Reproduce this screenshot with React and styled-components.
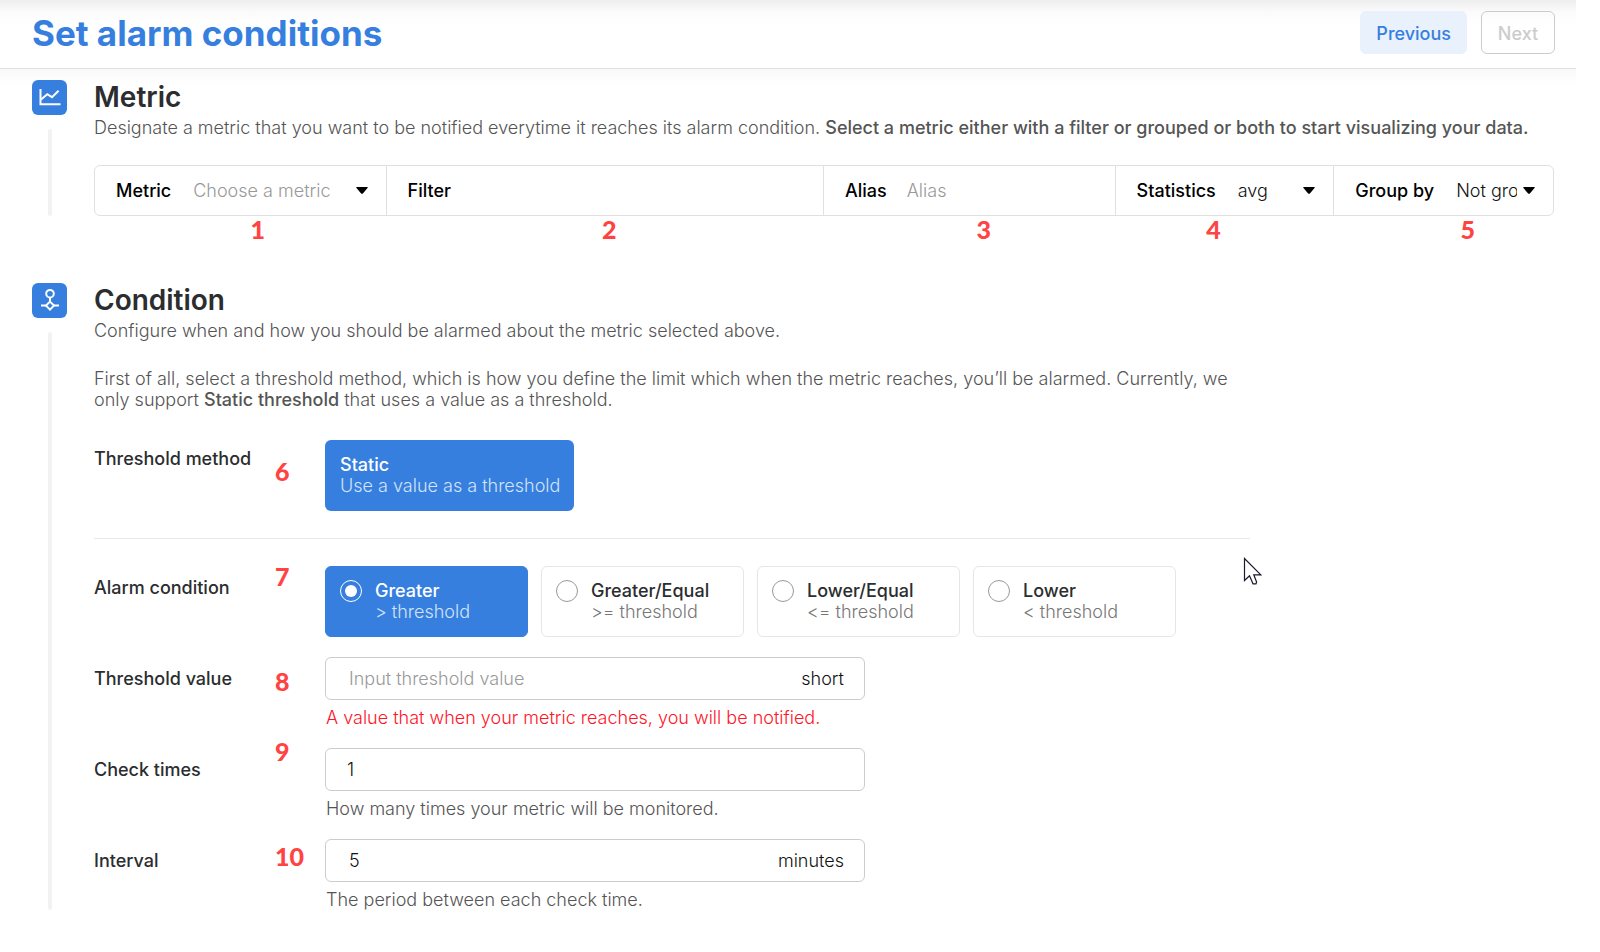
import React, { useState } from "react";
import styled, { createGlobalStyle, css } from "styled-components";

const blue = "#367fdf";

const GlobalStyle = createGlobalStyle`
  *, *::before, *::after { box-sizing: border-box; }
  body {
    margin: 0;
    background: #fff;
    color: #2b2d2f;
    font-family: Inter, "Liberation Sans", sans-serif;
    font-size: 18px;
    font-weight: 300;
    line-height: 21px;
  }
  button, input, select { font: inherit; color: inherit; }
  h1, h2, p, fieldset { margin: 0; padding: 0; border: 0; }
`;

const Page = styled.div`
  position: relative;
  margin-right: 24px;
`;

const Header = styled.header`
  display: flex;
  align-items: center;
  justify-content: space-between;
  height: 69px;
  padding: 0 21px 4px 32px;
  border-bottom: 1px solid #e0e0e0;
  background: linear-gradient(#eeeeee, #fbfbfb 12px, #ffffff 24px);
`;

const Title = styled.h1`
  padding-top: 2px;
  color: ${blue};
  font-size: 35px;
  line-height: 44px;
  font-weight: 700;
`;

const Actions = styled.div`
  display: flex;
  gap: 14px;
`;

const Button = styled.button`
  min-width: 74px;
  height: 43px;
  padding: 2px 15px 0;
  border: 1px solid ${(p) => (p.$primary ? "#e9f1fc" : "#cccccc")};
  border-radius: 6px;
  background: ${(p) => (p.$primary ? "#e9f1fc" : "transparent")};
  color: ${(p) => (p.$primary ? blue : "#cccccc")};
  font-weight: 500;
`;

const Main = styled.main`
  display: flex;
  flex-direction: column;
  gap: 67px;
  padding: 11px 22px 41px 32px;
  background: linear-gradient(#f9f9f9, #ffffff 16px);
`;

const Section = styled.section`
  display: flex;
  gap: 27px;
`;

const Side = styled.div`
  display: flex;
  flex: none;
  flex-direction: column;
  align-items: center;
  gap: 14px;
  width: 35px;
`;

const IconTile = styled.div`
  display: grid;
  place-items: center;
  width: 35px;
  height: 35px;
  border-radius: 6px;
  background: ${blue};
`;

const Rail = styled.div`
  flex: 1;
  width: 4px;
  border-radius: 2px;
  background: #f2f2f2;
`;

const Body = styled.div`
  flex: 1;
  min-width: 0;
`;

const Heading = styled.h2`
  margin-bottom: 3px;
  font-size: 28px;
  line-height: 34px;
  font-weight: 600;
`;

const Text = styled.p`
  max-width: ${(p) => (p.$narrow ? "1145px" : "none")};
  margin-bottom: 27px;
  color: #555555;

  strong { font-weight: 500; }
`;

const QueryBar = styled.div`
  display: grid;
  grid-template-columns: 20fr 30fr 20fr 15fr 15fr;
  border: 1px solid #e0e0e0;
  border-radius: 6px;
  background: #fff;
  color: #000;
`;

const Cell = styled.div`
  position: relative;
  display: flex;
  align-items: center;
  min-width: 0;
  height: 49px;
  padding: 0 18px 0 21px;

  &:not(:last-child) { border-right: 1px solid #e0e0e0; }
`;

const CellLabel = styled.label`
  flex: none;
  margin-right: 20px;
  font-weight: 500;
`;

const CellSelect = styled.select`
  flex: 1;
  min-width: 0;
  height: 40px;
  padding: 0 6px 0 2px;
  border: 0;
  outline: 0;
  appearance: none;
  background: transparent;
  color: ${(p) => (p.$empty ? "#999999" : "#111111")};
`;

const CellInput = styled.input`
  flex: 1;
  min-width: 0;
  height: 40px;
  padding: 0;
  border: 0;
  outline: 0;
  background: transparent;

  &::placeholder { color: #999999; }
`;

const markerText = css`
  position: absolute;
  color: #ff4343;
  font-family: Lato, "Liberation Sans", sans-serif;
  font-size: 25px;
  line-height: 28px;
  font-weight: 900;
`;

const CellMarker = styled.span`
  ${markerText}
  top: 100%;
  left: ${(p) => p.$at};
  transform: translateX(-50%);
`;

const RowMarker = styled.span`
  ${markerText}
  top: ${(p) => p.$top}px;
  left: 181px;
`;

const Form = styled.form`
  display: flex;
  flex-direction: column;
  gap: 20px;
  padding-top: 3px;
`;

const FormRow = styled.div`
  position: relative;
  display: flex;
`;

const RowLabel = styled.label`
  flex: none;
  width: 231px;
  padding-top: ${(p) => (p.$raised ? "8px" : "11px")};
  font-weight: 500;
`;

const Divider = styled.hr`
  width: 1156px;
  max-width: 100%;
  height: 1px;
  margin: 7px 0;
  border: 0;
  background: #e8e8e8;
`;

const MethodButton = styled.button`
  display: flex;
  flex-direction: column;
  justify-content: center;
  height: 71px;
  padding: 0 14px 2px 15px;
  border: 0;
  border-radius: 6px;
  background: ${blue};
  color: #fff;
  text-align: left;
`;

const OptionName = styled.span`
  font-weight: 500;
`;

const OptionHint = styled.span`
  color: ${(p) => (p.$active ? "#d3e3f8" : "#777777")};
`;

const Options = styled.div`
  display: flex;
  flex-wrap: wrap;
  gap: 13px;
`;

const Option = styled.label`
  display: flex;
  gap: 13px;
  width: 203px;
  height: 71px;
  padding: 13px 14px;
  border: 1px solid ${(p) => (p.$active ? blue : "#e6e6e6")};
  border-radius: 6px;
  background: ${(p) => (p.$active ? blue : "#fff")};
  color: ${(p) => (p.$active ? "#fff" : "#2b2d2f")};
`;

const OptionText = styled.span`
  display: flex;
  flex-direction: column;
`;

const Radio = styled.input`
  flex: none;
  display: grid;
  place-items: center;
  width: 22px;
  height: 22px;
  margin: 0;
  border: 1px solid #999999;
  border-radius: 50%;
  appearance: none;
  background: transparent;

  &:checked { border-color: #fff; }
  &:checked::before {
    content: "";
    width: 12px;
    height: 12px;
    border-radius: 50%;
    background: #fff;
  }
`;

const Field = styled.div`
  flex: 0 1 540px;
  min-width: 0;
`;

const InputBox = styled.div`
  display: flex;
  align-items: center;
  height: 43px;
  padding: 0 20px 0 ${(p) => (p.$unit ? "23px" : "21px")};
  border: 1px solid #cccccc;
  border-radius: 6px;
  color: #111111;
`;

const Input = styled.input`
  flex: 1;
  min-width: 0;
  height: 40px;
  padding: 0;
  border: 0;
  outline: 0;
  background: transparent;

  &::placeholder { color: #999999; }
`;

const Help = styled.p`
  padding: 7px 0 0 1px;
  color: ${(p) => (p.$error ? "#ff1428" : "#555555")};
`;

const Cursor = styled.svg`
  position: absolute;
  top: 557px;
  left: 1243px;
  pointer-events: none;
`;

const ChartIcon = () => (
  <svg width="35" height="35" viewBox="0 0 35 35" fill="none" stroke="#fff" strokeWidth="2" aria-hidden="true">
    <path d="M8.5 9V24.3H28.5" />
    <path d="M9 19.6L15.3 14.2L20 17.2L26.6 10.8" />
  </svg>
);

const NodeIcon = () => (
  <svg width="35" height="35" viewBox="0 0 35 35" fill="none" stroke="#fff" strokeWidth="2" aria-hidden="true">
    <circle cx="18" cy="10.7" r="3.8" />
    <path d="M18 14.5V19" />
    <path d="M18 18.6L22 22.6L18 26.6L14 22.6Z" />
    <path d="M9 22.6H14M22 22.6H27" />
  </svg>
);

const Arrow = () => (
  <svg width="12" height="7" viewBox="0 0 12 7" aria-hidden="true">
    <path d="M0.8 0H11.2Q12.3 0.3 11.5 1.1L6.9 6.4Q6 7.3 5.1 6.4L0.5 1.1Q-0.3 0.3 0.8 0Z" fill="#000" />
  </svg>
);

const conditions = [
  ["Greater", "> threshold"],
  ["Greater/Equal", ">= threshold"],
  ["Lower/Equal", "<= threshold"],
  ["Lower", "< threshold"],
];

function SelectCell({ id, label, value, empty, marker, at }) {
  return (
    <Cell>
      <CellLabel htmlFor={id}>{label}</CellLabel>
      <CellSelect id={id} $empty={empty}>
        <option>{value}</option>
      </CellSelect>
      <Arrow />
      <CellMarker $at={at}>{marker}</CellMarker>
    </Cell>
  );
}

function InputRow({ id, label, marker, markerTop, unit, help, error, ...input }) {
  return (
    <FormRow>
      <RowLabel htmlFor={id}>{label}</RowLabel>
      <RowMarker $top={markerTop}>{marker}</RowMarker>
      <Field>
        <InputBox $unit={Boolean(unit)}>
          <Input id={id} type="text" {...input} />
          {unit && <span>{unit}</span>}
        </InputBox>
        <Help $error={error}>{help}</Help>
      </Field>
    </FormRow>
  );
}

export default function App() {
  const [condition, setCondition] = useState("Greater");

  return (
    <Page>
      <GlobalStyle />
      <Header>
        <Title>Set alarm conditions</Title>
        <Actions>
          <Button type="button" $primary>Previous</Button>
          <Button type="button" disabled>Next</Button>
        </Actions>
      </Header>

      <Main>
        <Section>
          <Side>
            <IconTile><ChartIcon /></IconTile>
            <Rail />
          </Side>
          <Body>
            <Heading>Metric</Heading>
            <Text>
              Designate a metric that you want to be notified everytime it reaches its alarm condition.{" "}
              <strong>Select a metric either with a filter or grouped or both to start visualizing your data.</strong>
            </Text>
            <QueryBar>
              <SelectCell id="metric" label="Metric" value="Choose a metric" empty marker="1" at="56%" />
              <Cell>
                <CellLabel htmlFor="filter">Filter</CellLabel>
                <CellInput id="filter" type="text" />
                <CellMarker $at="51%">2</CellMarker>
              </Cell>
              <Cell>
                <CellLabel htmlFor="alias">Alias</CellLabel>
                <CellInput id="alias" type="text" placeholder="Alias" />
                <CellMarker $at="55%">3</CellMarker>
              </Cell>
              <SelectCell id="statistics" label="Statistics" value="avg" marker="4" at="45%" />
              <SelectCell id="group" label="Group by" value="Not grouped" marker="5" at="61%" />
            </QueryBar>
          </Body>
        </Section>

        <Section>
          <Side>
            <IconTile><NodeIcon /></IconTile>
            <Rail />
          </Side>
          <Body>
            <Heading>Condition</Heading>
            <Text>Configure when and how you should be alarmed about the metric selected above.</Text>
            <Text $narrow>
              First of all, select a threshold method, which is how you define the limit which when the metric
              reaches, you’ll be alarmed. Currently, we only support <strong>Static threshold</strong> that uses a
              value as a threshold.
            </Text>

            <Form>
              <FormRow>
                <RowLabel htmlFor="method" $raised>Threshold method</RowLabel>
                <RowMarker $top={17}>6</RowMarker>
                <MethodButton id="method" type="button">
                  <OptionName>Static</OptionName>
                  <OptionHint $active>Use a value as a threshold</OptionHint>
                </MethodButton>
              </FormRow>

              <Divider />

              <FormRow role="radiogroup" aria-labelledby="condition-label">
                <RowLabel as="span" id="condition-label">Alarm condition</RowLabel>
                <RowMarker $top={-4}>7</RowMarker>
                <Options>
                  {conditions.map(([name, hint]) => {
                    const active = name === condition;
                    return (
                      <Option key={name} $active={active}>
                        <Radio
                          type="radio"
                          name="condition"
                          checked={active}
                          onChange={() => setCondition(name)}
                        />
                        <OptionText>
                          <OptionName>{name}</OptionName>
                          <OptionHint $active={active}>{hint}</OptionHint>
                        </OptionText>
                      </Option>
                    );
                  })}
                </Options>
              </FormRow>

              <InputRow
                id="threshold"
                label="Threshold value"
                marker="8"
                markerTop={10}
                unit="short"
                placeholder="Input threshold value"
                help="A value that when your metric reaches, you will be notified."
                error
              />
              <InputRow
                id="times"
                label="Check times"
                marker="9"
                markerTop={-11}
                defaultValue="1"
                help="How many times your metric will be monitored."
              />
              <InputRow
                id="interval"
                label="Interval"
                marker="10"
                markerTop={3}
                unit="minutes"
                defaultValue="5"
                help="The period between each check time."
              />
            </Form>
          </Body>
        </Section>
      </Main>

      <Cursor width="19" height="29" viewBox="0 0 19 29" aria-hidden="true">
        <path
          d="M1.5 1.5V23.5L6.5 18.8L10 26.8H13L13.6 25L10.8 17.8H17.8Z"
          fill="#fff"
          stroke="#1a1a2a"
          strokeWidth="1.2"
        />
      </Cursor>
    </Page>
  );
}
